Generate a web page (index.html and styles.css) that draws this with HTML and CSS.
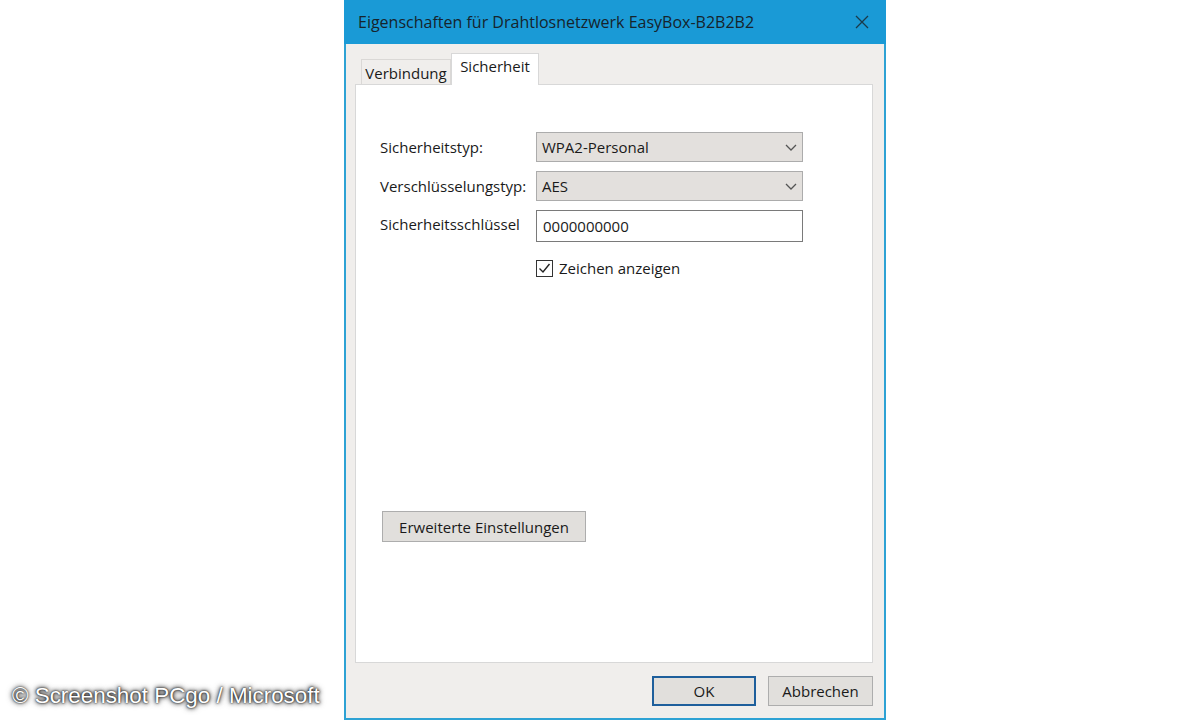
FILE: index.html
```html
<!DOCTYPE html>
<html>
	<head>
		<meta charset="UTF-8">
		<title>Eigenschaften für Drahtlosnetzwerk EasyBox-B2B2B2</title>
		<link rel="stylesheet" href="styles.css">
	</head>
	<body>
		<div class="dlg">
			<div class="dlg-title">
				<span class="dlg-title-text">Eigenschaften für Drahtlosnetzwerk EasyBox-B2B2B2</span>
				<svg class="dlg-title-close" width="14" height="14" viewBox="0 0 14 14"><path d="M1 1L13 13M13 1L1 13" stroke="#1a3a4a" stroke-width="1.3" fill="none"/></svg>
			</div>
			<div class="dlg-body">
				<div class="tabs">
					<div class="tab">Verbindung</div>
					<div class="tab tab-active">Sicherheit</div>
				</div>
				<div class="panel">
					<div class="form">
						<div class="form-label">Sicherheitstyp:</div>
						<div class="combo">
							<span>WPA2-Personal</span>
							<svg width="12" height="7" viewBox="0 0 12 7"><path d="M1 1L6 6L11 1" stroke="#555" stroke-width="1.3" fill="none"/></svg>
						</div>
						<div class="form-label">Verschlüsselungstyp:</div>
						<div class="combo">
							<span>AES</span>
							<svg width="12" height="7" viewBox="0 0 12 7"><path d="M1 1L6 6L11 1" stroke="#555" stroke-width="1.3" fill="none"/></svg>
						</div>
						<div class="form-label form-label-key">Sicherheitsschlüssel</div>
						<div class="textbox">0000000000</div>
						<div></div>
						<div class="check">
							<svg class="check-box" width="17" height="17" viewBox="0 0 17 17"><rect x="0.5" y="0.5" width="16" height="16" fill="#fff" stroke="#333"/><path d="M3.5 8.5L7 12L13.5 4" stroke="#222" stroke-width="1.4" fill="none"/></svg>
							<span>Zeichen anzeigen</span>
						</div>
					</div>
					<div class="btn btn-adv">Erweiterte Einstellungen</div>
				</div>
				<div class="footer">
					<div class="btn btn-foot btn-default">OK</div>
					<div class="btn btn-foot">Abbrechen</div>
				</div>
			</div>
		</div>
		<div class="credit">© Screenshot PCgo / Microsoft</div>
	</body>
</html>
```

FILE: styles.css
```css
body{margin: 0; width: 1200px; height: 720px; background: #fff; position: relative; overflow: hidden; font-family: "Open Sans", "Noto Sans", sans-serif; font-size: 15px; color: #1a1a1a;}
.dlg{margin-left: 344px; width: 542px; height: 720px; display: flex; flex-direction: column;}
.dlg-title{height: 44px; flex: none; background: #1a9ad6; display: flex; align-items: center; justify-content: space-between; padding: 0 17px 0 14px;}
.dlg-title-text{font-size: 16px; color: #16242c;}
.dlg-body{flex: 1; display: flex; flex-direction: column; background: #f0eeec; border: 2px solid #2ea2d4; border-top: none;}
.tabs{display: flex; align-items: flex-end; margin: 9px 0 0 15px; height: 32px; position: relative; z-index: 1;}
.tab{height: 25px; width: 90px; box-sizing: border-box; border: 1px solid #dad8d6; border-bottom: none; background: #f0eeec; display: flex; align-items: center; justify-content: center; padding-top: 1px; margin-bottom: 1px;}
.tab-active{height: 32px; width: 88px; background: #fff; border-color: #d8d8d8; margin-bottom: 0; padding: 0 0 8px 0;}
.panel{flex: 1; margin: -1px 11px 0 9px; background: #fff; border: 1px solid #d8d8d8; display: flex; flex-direction: column; padding: 47px 0 0 24px;}
.form{display: grid; grid-template-columns: 156px 267px; grid-auto-rows: auto; row-gap: 9px; align-items: center;}
.form .form-label-key{margin-top: -4px;}
.combo{height: 30px; box-sizing: border-box; background: #e3e0dd; border: 1px solid #acacac; display: flex; align-items: center; justify-content: space-between; padding: 0 5px 0 5px;}
.textbox{height: 32px; box-sizing: border-box; background: #fff; border: 1px solid #7a7a7a; display: flex; align-items: center; padding-left: 6px;}
.check{display: flex; align-items: center; gap: 6px; margin-top: 7px;}
.check-box{flex: none;}
.btn{box-sizing: border-box; height: 31px; background: #e1dfdc; border: 1px solid #adadad; display: flex; align-items: center; justify-content: center;}
.btn-adv{width: 204px; margin: auto 0 120px 2px;}
.footer{display: flex; justify-content: flex-end; gap: 12px; padding: 13px 11px 0 0; height: 55px; box-sizing: border-box;}
.btn-foot{width: 105px; height: 30px;}
.btn-default{width: 104px; border: 2px solid #1e5f9c;}
.credit{position: absolute; left: 12px; top: 683px; font-family: "Liberation Sans", Arial, sans-serif; font-size: 22.4px; color: #fff; text-shadow: 0 0 2px #000, 0 0 4px #222, 0 0 6px #555;}
```
